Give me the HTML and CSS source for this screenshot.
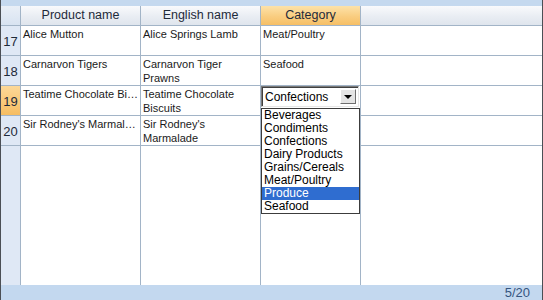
FILE: index.html
```html
<!DOCTYPE html>
<html lang="en">
<head>
    <meta charset="UTF-8">
    <meta name="viewport" content="width=device-width, initial-scale=1.0">
    <title>Products Grid</title>
    <link rel="stylesheet" href="styles.css">
</head>
<body>

    <div class="frame">
        <div class="top-band"></div>

        <div class="grid">
            <div class="hcell corner"></div>
            <div class="hcell">Product name</div>
            <div class="hcell">English name</div>
            <div class="hcell active">Category</div>
            <div class="hcell last"></div>

            <div class="rowhead">17</div>
            <div class="cell">Alice Mutton</div>
            <div class="cell">Alice Springs Lamb</div>
            <div class="cell">Meat/Poultry</div>
            <div class="cell last"></div>

            <div class="rowhead">18</div>
            <div class="cell">Carnarvon Tigers</div>
            <div class="cell">Carnarvon Tiger Prawns</div>
            <div class="cell">Seafood</div>
            <div class="cell last"></div>

            <div class="rowhead current">19</div>
            <div class="cell clip">Teatime Chocolate Biscuits</div>
            <div class="cell">Teatime Chocolate Biscuits</div>
            <div class="cell editor">
                <div class="combo">
                    <span class="combo-text">Confections</span>
                    <span class="combo-btn"><span class="arrow"></span></span>
                </div>
                <ul class="combo-list">
                    <li>Beverages</li>
                    <li>Condiments</li>
                    <li>Confections</li>
                    <li>Dairy Products</li>
                    <li>Grains/Cereals</li>
                    <li>Meat/Poultry</li>
                    <li class="selected">Produce</li>
                    <li>Seafood</li>
                </ul>
            </div>
            <div class="cell last"></div>

            <div class="rowhead">20</div>
            <div class="cell clip">Sir Rodney's Marmalade</div>
            <div class="cell">Sir Rodney's Marmalade</div>
            <div class="cell"></div>
            <div class="cell last"></div>

            <div class="rowhead filler"></div>
            <div class="cell filler"></div>
            <div class="cell filler"></div>
            <div class="cell filler"></div>
            <div class="cell filler last"></div>
        </div>

        <div class="status">5/20</div>
    </div>

</body>
</html>
```

FILE: styles.css
```css
body {
    margin: 0;
    font-family: "Liberation Sans", Arial, sans-serif;
    background: #ffffff;
}
.frame {
    width: 543px;
    height: 300px;
    box-sizing: border-box;
    border-left: 1px solid #4b4f55;
    border-right: 1px solid #4b4f55;
    display: flex;
    flex-direction: column;
}
.top-band {
    height: 6px;
    background: #c5d9ef;
}
.grid {
    flex: 1;
    display: grid;
    grid-template-columns: 20px 120px 120px 100px 1fr;
    grid-template-rows: 20px repeat(4, 30px) 1fr;
}
.hcell, .cell, .rowhead {
    box-sizing: border-box;
    border-right: 1px solid #a2b4c7;
    border-bottom: 1px solid #a2b4c7;
}
.hcell {
    background: linear-gradient(#f9fafc, #e9edf3 55%, #dfe5ed);
    color: #1e2a3a;
    font-size: 12.5px;
    line-height: 19px;
    text-align: center;
}
.hcell.corner {
    background: linear-gradient(#e9eff7, #d8e3f1);
}
.hcell.active {
    background: linear-gradient(#fde2a9, #f9cd80 55%, #f6bf66);
}
.last {
    border-right: none;
}
.rowhead {
    background: #dfe8f5;
    color: #1e2a3a;
    font-size: 13px;
    display: flex;
    align-items: center;
    justify-content: center;
    padding-top: 2px;
}
.rowhead.current {
    background: linear-gradient(#fcd898, #f6bd62);
}
.cell {
    font-size: 11px;
    line-height: 14px;
    color: #1a1a1a;
    padding: 1px 2px 0;
    overflow: hidden;
}
.cell.clip {
    white-space: nowrap;
    text-overflow: ellipsis;
}
.filler {
    border-bottom: none;
}
.editor {
    position: relative;
    overflow: visible;
    padding: 0;
}
.combo {
    position: absolute;
    left: 0;
    top: 0;
    width: 98px;
    height: 21px;
    box-sizing: border-box;
    border: 1px solid #7a7a7a;
    border-right-color: #e6e6e6;
    border-bottom-color: #e6e6e6;
    box-shadow: inset 1px 1px 0 #404040;
    background: #ffffff;
    display: flex;
    align-items: center;
    font-size: 12px;
    color: #000000;
}
.combo-text {
    flex: 1;
    padding-left: 3px;
}
.combo-btn {
    width: 16px;
    height: 15px;
    margin-right: 2px;
    box-sizing: border-box;
    background: #e4e4e4;
    border: 1px solid #ffffff;
    border-right-color: #6e6e6e;
    border-bottom-color: #6e6e6e;
    display: flex;
    align-items: center;
    justify-content: center;
}
.arrow {
    width: 0;
    height: 0;
    border-left: 4px solid transparent;
    border-right: 4px solid transparent;
    border-top: 4px solid #000000;
}
.combo-list {
    position: absolute;
    left: 0;
    top: 22px;
    width: 99px;
    margin: 0;
    padding: 0;
    list-style: none;
    box-sizing: border-box;
    border: 1px solid #3c3c3c;
    background: #ffffff;
    font-size: 12px;
    z-index: 2;
}
.combo-list li {
    height: 13px;
    line-height: 13px;
    padding-left: 2px;
    color: #000000;
}
.combo-list li.selected {
    background: #2f6dd0;
    color: #ffffff;
}
.status {
    height: 15px;
    background: #c3d8ef;
    color: #34557f;
    font-size: 13px;
    line-height: 15px;
    text-align: right;
    padding-right: 12px;
}
```
